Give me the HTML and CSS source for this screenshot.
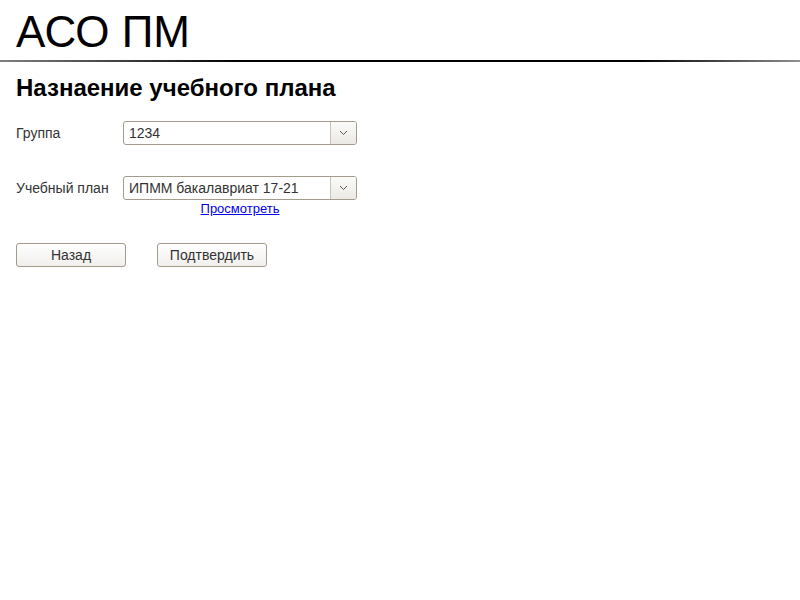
FILE: index.html
```html
<!DOCTYPE html>
<html lang="ru">
<head>
<meta charset="utf-8">
<title>АСО ПМ</title>
<link rel="stylesheet" href="styles.css">
</head>
<body>
<header class="header">
  <h1 class="logo">АСО ПМ</h1>
</header>
<div class="rule"></div>
<main class="content">
  <h2 class="page-title">Назнаение учебного плана</h2>
  <div class="form">
    <div class="row">
      <label class="label">Группа</label>
      <div class="field">
        <div class="select">
          <span class="select-value">1234</span>
          <span class="select-btn"><svg width="9" height="6" viewBox="0 0 9 6"><path d="M1 1 L4.5 4.5 L8 1" fill="none" stroke="#555" stroke-width="1"/></svg></span>
        </div>
      </div>
    </div>
    <div class="row row-plan">
      <label class="label">Учебный план</label>
      <div class="field">
        <div class="select">
          <span class="select-value">ИПММ бакалавриат 17-21</span>
          <span class="select-btn"><svg width="9" height="6" viewBox="0 0 9 6"><path d="M1 1 L4.5 4.5 L8 1" fill="none" stroke="#555" stroke-width="1"/></svg></span>
        </div>
        <a class="link" href="#">Просмотреть</a>
      </div>
    </div>
  </div>
  <div class="actions">
    <button class="btn">Назад</button>
    <button class="btn">Подтвердить</button>
  </div>
</main>
</body>
</html>
```

FILE: styles.css
```css
html, body {
  margin: 0;
  padding: 0;
  background: #fff;
  font-family: "Liberation Sans", Arial, sans-serif;
  color: #000;
}
.header {
  padding: 6px 16px 0;
  height: 54px;
}
.logo {
  margin: 0;
  font-weight: normal;
  font-size: 44px;
  line-height: 52px;
}
.rule {
  height: 2px;
  background: linear-gradient(to right, #808080 0%, #000 30%, #000 80%, #909090 100%);
}
.content {
  padding: 11px 16px 0;
}
.page-title {
  margin: 0;
  font-size: 24px;
  line-height: 30px;
  font-weight: bold;
}
.form {
  margin-top: 18px;
}
.row {
  display: flex;
  align-items: flex-start;
}
.row-plan {
  margin-top: 31px;
}
.label {
  width: 107px;
  font-size: 14px;
  line-height: 24px;
  color: #333;
}
.field {
  display: flex;
  flex-direction: column;
  align-items: center;
  width: 234px;
}
.select {
  box-sizing: border-box;
  width: 234px;
  height: 24px;
  border: 1px solid #a39c8c;
  border-radius: 3px;
  display: flex;
  align-items: stretch;
  background: #fff;
}
.select-value {
  flex: 1;
  padding-left: 5px;
  font-size: 14px;
  line-height: 22px;
  color: #333;
}
.select-btn {
  width: 25px;
  border-left: 1px solid #c8c3b8;
  background: linear-gradient(#fbfbf9, #ebe9e3);
  border-radius: 0 2px 2px 0;
  display: flex;
  align-items: center;
  justify-content: center;
}
.link {
  margin-top: 1px;
  font-size: 13px;
  line-height: 15px;
  color: #0000ee;
}
.actions {
  margin-top: 27px;
  display: flex;
  gap: 31px;
}
.btn {
  box-sizing: border-box;
  width: 110px;
  height: 24px;
  padding: 0;
  border: 1px solid #a39c8c;
  border-radius: 3px;
  background: linear-gradient(#ffffff, #f0efec);
  font-family: "Liberation Sans", Arial, sans-serif;
  font-size: 14px;
  color: #333;
}
```
